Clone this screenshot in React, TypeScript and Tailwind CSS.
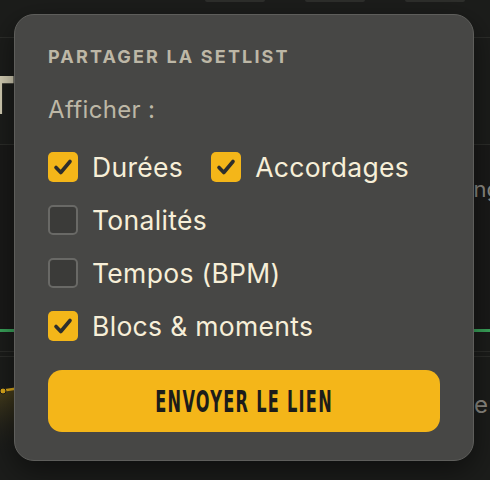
import React from "react";

function Check({ checked }: { checked: boolean }) {
  if (checked) {
    return (
      <div className="w-[30px] h-[30px] rounded-[5px] bg-[#f4b619] flex items-center justify-center shrink-0">
        <svg width="30" height="30" viewBox="0 0 30 30">
          <path d="M8 15.5 L12.8 20.5 L22 9.5" fill="none" stroke="#2e2e2c" strokeWidth="3.6" strokeLinecap="round" strokeLinejoin="round" />
        </svg>
      </div>
    );
  }
  return <div className="w-[30px] h-[30px] rounded-[5px] bg-[#3b3b39] border-2 border-[#696966] shrink-0" />;
}

function Item({ label, checked }: { label: string; checked: boolean }) {
  return (
    <div className="flex items-center gap-[14px]">
      <Check checked={checked} />
      <span className="text-[26.5px] leading-[30px] font-normal tracking-[0.012em] text-[#f7efd8]">{label}</span>
    </div>
  );
}

export default function App() {
  return (
    <div className="relative w-[490px] h-[480px] overflow-hidden bg-[#1c1d1b]" style={{ fontFamily: "Inter, 'Noto Sans', sans-serif" }}>
      {/* background page */}
      <div className="flex flex-col">
        <div className="h-[38px] border-b border-[#2c2d2a] flex gap-[40px] pl-[205px]">
          <div className="w-[60px] h-[2px] rounded-b-full bg-[#2e2f2c]" />
          <div className="w-[60px] h-[2px] rounded-b-full bg-[#2e2f2c]" />
          <div className="w-[60px] h-[2px] rounded-b-full bg-[#2e2f2c]" />
        </div>
        <div className="h-[107px] border-b border-[#2c2d2a] flex items-center pt-[10px]">
          <span className="ml-[-20px] text-[52px] font-extrabold text-[#d6d0b6] leading-none">T</span>
        </div>
        <div className="h-[184px] bg-[#1a1a19] flex justify-end pt-[28px]">
          <span className="text-[22px] text-[#8e8c85] mr-[-10px]">ng</span>
        </div>
        <div className="h-[3px] bg-[#3aa55b]" />
        <div className="h-[20px] border-b border-[#2c2d2a]" />
        <div className="h-[97px] border-t border-[#2c2d2a] mt-[4px] relative flex justify-end items-center">
          <svg className="absolute left-0 top-0" width="60" height="97" viewBox="0 0 60 97">
            <defs>
              <linearGradient id="g" x1="0" y1="0" x2="0" y2="1">
                <stop offset="0" stopColor="#6b5a1c" stopOpacity="0.7" />
                <stop offset="1" stopColor="#1c1d1b" stopOpacity="0" />
              </linearGradient>
            </defs>
            <path d="M0 34 L20 31 L45 26 L45 97 L0 97 Z" fill="url(#g)" />
            <path d="M0 34 L20 31 L45 26" fill="none" stroke="#e0ac1c" strokeWidth="2.5" />
            <circle cx="3" cy="34" r="3" fill="#e0ac1c" stroke="#1c1d1b" strokeWidth="1" />
          </svg>
          <span className="text-[24px] text-[#8e8c85] mr-[2px]">e</span>
        </div>
        <div className="flex-1 bg-[#191a18]" />
      </div>

      {/* popover */}
      <div className="absolute left-[14px] top-[14px] w-[460px] h-[447px] rounded-[20px] border border-[#5e5e5b] bg-[#474745] pl-[33px] pt-[31px] shadow-[0_10px_30px_rgba(0,0,0,0.5)]">
        <div className="text-[18px] leading-[22px] font-bold tracking-[0.12em] text-[#bdb7a6]">PARTAGER LA SETLIST</div>
        <div className="mt-[28px] text-[24px] leading-[28px] tracking-[0.015em] text-[#bdb7a6]">Afficher :</div>
        <div className="mt-[28px] flex flex-col gap-[23px]">
          <div className="flex gap-[28px]">
            <Item label="Durées" checked />
            <Item label="Accordages" checked />
          </div>
          <Item label="Tonalités" checked={false} />
          <Item label="Tempos (BPM)" checked={false} />
          <Item label="Blocs & moments" checked />
        </div>
        <button className="mt-[29px] w-[392px] h-[62px] rounded-[14px] bg-[#f4b619] flex items-center justify-center">
          <span
            className="text-[30px] font-bold text-[#1c1c1a] tracking-[0.07em] scale-x-[0.6] inline-block whitespace-nowrap"
            style={{ fontFamily: "'Liberation Sans Narrow', 'DejaVu Sans Condensed', 'Liberation Sans', sans-serif" }}
          >
            ENVOYER LE LIEN
          </span>
        </button>
      </div>
    </div>
  );
}
